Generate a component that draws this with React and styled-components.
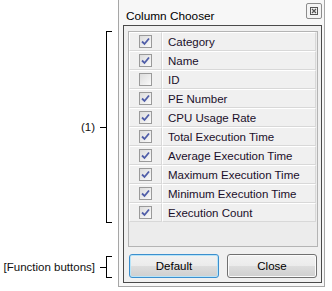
import React from 'react'
import styled, { createGlobalStyle } from 'styled-components'

const columns = [
    { label: 'Category', checked: true },
    { label: 'Name', checked: true },
    { label: 'ID', checked: false },
    { label: 'PE Number', checked: true },
    { label: 'CPU Usage Rate', checked: true },
    { label: 'Total Execution Time', checked: true },
    { label: 'Average Execution Time', checked: true },
    { label: 'Maximum Execution Time', checked: true },
    { label: 'Minimum Execution Time', checked: true },
    { label: 'Execution Count', checked: true },
]

function CheckBox({ checked }) {
    return (
        <Box>
            {checked && (
                <svg width="9" height="9" viewBox="0 0 9 9">
                    <path d="M1 4.5 L3.5 7 L8 1.5" fill="none" stroke="#4f5da8" strokeWidth="1.8" />
                </svg>
            )}
        </Box>
    )
}

function App() {
    return (
        <>
            <GlobalStyle />
            <Page>
                <Notes>
                    <Note height={192}>
                        <NoteLabel>(1)</NoteLabel>
                        <Tick />
                        <Bracket />
                    </Note>
                    <Note height={22} top={33}>
                        <NoteLabel>[Function buttons]</NoteLabel>
                        <Tick />
                        <Bracket />
                    </Note>
                </Notes>
                <Window>
                    <TitleBar>
                        <Title>Column Chooser</Title>
                        <CloseBox>
                            <svg width="8" height="8" viewBox="0 0 8 8">
                                <rect x="0.5" y="0.5" width="7" height="7" fill="none" stroke="#555" />
                                <path d="M2 2 L6 6 M6 2 L2 6" stroke="#555" strokeWidth="1.2" />
                            </svg>
                        </CloseBox>
                    </TitleBar>
                    <Panel>
                        <List>
                            {columns.map(c => (
                                <Row key={c.label}>
                                    <CheckCell>
                                        <CheckBox checked={c.checked} />
                                    </CheckCell>
                                    <LabelCell>{c.label}</LabelCell>
                                </Row>
                            ))}
                        </List>
                        <Buttons>
                            <Button focused>Default</Button>
                            <Button>Close</Button>
                        </Buttons>
                    </Panel>
                </Window>
            </Page>
        </>
    )
}

export default App

const GlobalStyle = createGlobalStyle`
    body {
        margin: 0;
        background: #ffffff;
        font-family: "Liberation Sans", Arial, sans-serif;
        font-size: 11.5px;
        color: #000;
    }
`

const Page = styled.div`
    display: flex;
    width: 332px;
    height: 291px;
    overflow: hidden;
`

const Notes = styled.div`
    width: 118px;
    flex-shrink: 0;
    display: flex;
    flex-direction: column;
    padding-top: 31px;
    box-sizing: border-box;
`

const Note = styled.div`
    display: flex;
    align-items: center;
    justify-content: flex-end;
    height: ${p => p.height}px;
    margin-top: ${p => p.top || 0}px;
    padding-right: 6px;
`

const NoteLabel = styled.span`
    font-size: 11.5px;
    color: #111;
    margin-right: 5px;
    white-space: nowrap;
`

const Tick = styled.div`
    width: 6px;
    height: 1px;
    background: #000;
    flex-shrink: 0;
`

const Bracket = styled.div`
    align-self: stretch;
    width: 5px;
    flex-shrink: 0;
    border: 1px solid #000;
    border-right: none;
`

const Window = styled.div`
    width: 207px;
    height: 287px;
    box-sizing: border-box;
    border: 1px solid #a6a6a6;
    border-top: none;
    background: #f7f7f7;
    display: flex;
    flex-direction: column;
`

const TitleBar = styled.div`
    height: 25px;
    display: flex;
    align-items: center;
    padding: 0 2px 0 7px;
    box-sizing: border-box;
`

const Title = styled.div`
    flex: 1;
    font-size: 11.8px;
    margin-top: 6px;
`

const CloseBox = styled.div`
    width: 16px;
    height: 16px;
    box-sizing: border-box;
    border: 1px solid #8c8c8c;
    border-radius: 2px;
    background: #f4f4f4;
    display: flex;
    align-items: center;
    justify-content: center;
    margin-top: -3px;
`

const Panel = styled.div`
    margin: 0 2px 0 4px;
    height: 258px;
    box-sizing: border-box;
    border: 1px solid #4a4a4a;
    background: #f0f0f0;
    padding: 5px 3px 0 4px;
    display: flex;
    flex-direction: column;
`

const List = styled.div`
    height: 216px;
    box-sizing: border-box;
    border: 1px solid #b4b4b4;
    background: #ececec;
    padding-right: 1px;
`

const Row = styled.div`
    display: flex;
    height: 19px;
`

const Cell = styled.div`
    box-sizing: border-box;
    height: 19px;
    background: #f0f0f0;
    border-top: 1px solid #ffffff;
    border-left: 1px solid #ffffff;
    border-bottom: 1px solid #d8d8d8;
    border-right: 1px solid #d8d8d8;
    display: flex;
    align-items: center;
`

const CheckCell = styled(Cell)`
    width: 33px;
    justify-content: center;
`

const LabelCell = styled(Cell)`
    flex: 1;
    padding-left: 5px;
    font-size: 11.5px;
    color: #1a0f2a;
`

const Box = styled.div`
    width: 13px;
    height: 13px;
    box-sizing: border-box;
    border: 1px solid #9a9a9a;
    background: linear-gradient(135deg, #dcdcdc, #fafafa);
    display: flex;
    align-items: center;
    justify-content: center;
`

const Buttons = styled.div`
    display: flex;
    gap: 8px;
    margin-top: 7px;
    padding-left: 1px;
`

const Button = styled.button`
    width: 90px;
    height: 24px;
    box-sizing: border-box;
    border: 1px solid ${p => (p.focused ? '#3c8fce' : '#707070')};
    border-radius: 3px;
    background: linear-gradient(#f2f2f2 0%, #ebebeb 50%, #dddddd 50%, #cfcfcf 100%);
    box-shadow: inset 0 0 0 1px ${p => (p.focused ? '#b8e4f8' : '#fbfbfb')};
    font-family: "Liberation Sans", Arial, sans-serif;
    font-size: 11.5px;
    color: #000;
    padding: 0;
`
